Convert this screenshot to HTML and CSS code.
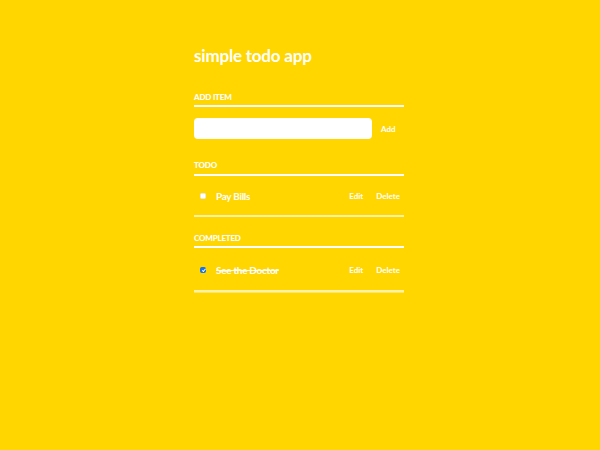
FILE: index.html
```html
<!DOCTYPE html>
<html>
<head>
<meta charset="utf-8">
<link rel="stylesheet" href="styles.css">
</head>
<body>
<div class="app">
  <h1 class="title">simple todo app</h1>
  <h3 class="section">Add Item</h3>
  <div class="add-row">
    <input class="new-input" type="text">
    <button class="link-btn add-btn">Add</button>
  </div>
  <h3 class="section section-todo">Todo</h3>
  <ul class="list">
    <li class="item">
      <input class="check" type="checkbox">
      <span class="label">Pay Bills</span>
      <button class="link-btn">Edit</button>
      <button class="link-btn">Delete</button>
    </li>
  </ul>
  <h3 class="section section-done">Completed</h3>
  <ul class="list list-done">
    <li class="item done">
      <input class="check" type="checkbox" checked>
      <span class="label">See the Doctor</span>
      <button class="link-btn">Edit</button>
      <button class="link-btn">Delete</button>
    </li>
  </ul>
</div>
</body>
</html>
```
FILE: styles.css
```css
html, body {
  margin: 0;
  padding: 0;
  background: #ffd600;
  height: 100%;
}
body {
  font-family: Lato, "Open Sans", sans-serif;
  color: #fff;
}
.app {
  width: 210px;
  margin: 0 0 0 194px;
  padding-top: 45px;
}
.title {
  margin: 0;
  font-size: 17px;
  line-height: 22px;
  font-weight: 700;
  letter-spacing: -0.2px;
}
.section {
  margin: 25px 0 0;
  font-size: 8px;
  line-height: 10px;
  font-weight: 900;
  text-transform: uppercase;
  letter-spacing: -0.2px;
  padding-bottom: 3px;
  border-bottom: 2px solid #fff;
}
.section-todo { margin-top: 21px; padding-bottom: 4px; }
.section-done { margin-top: 16px; }
.add-row {
  display: flex;
  align-items: center;
  margin-top: 11px;
}
.new-input {
  width: 178px;
  height: 21px;
  box-sizing: border-box;
  border: none;
  border-radius: 4px;
  background: #fff;
  padding: 0 6px;
  margin: 0;
  outline: none;
}
.link-btn {
  background: none;
  border: none;
  padding: 0;
  margin: 0;
  color: #fff;
  font-family: Lato, sans-serif;
  font-weight: 700;
  font-size: 8px;
  cursor: pointer;
}
.add-btn { margin-left: 9px; margin-top: 1px; }
.list {
  list-style: none;
  margin: 0;
  padding: 0;
}
.item {
  display: flex;
  align-items: center;
  height: 41px;
  border-bottom: 2px solid rgba(255,255,255,0.65);
  padding: 0 4px 0 6px;
  box-sizing: border-box;
}
.list-done {
  border-bottom: 1px solid rgba(255,255,255,0.4);
}
.list-done .item { height: 44px; padding-top: 2px; }
.check {
  -webkit-appearance: none;
  appearance: none;
  width: 6px;
  height: 6px;
  margin: 0 10px 0 0;
  border-radius: 1.5px;
  background: #fff;
  border: 1px solid #e8e8e8;
  box-sizing: border-box;
  position: relative;
}
.check:checked {
  background: #1a73e8;
  border-color: #1a73e8;
}
.check:checked::after {
  content: "";
  position: absolute;
  left: 1.5px;
  top: 0;
  width: 1.2px;
  height: 2.8px;
  border: solid #fff;
  border-width: 0 1px 1px 0;
  transform: rotate(40deg);
}
.label {
  flex: 1;
  font-size: 10px;
  font-weight: 700;
  letter-spacing: -0.3px;
}
.done .label { text-decoration: line-through; }
.item .link-btn + .link-btn { margin-left: 13px; }
```
